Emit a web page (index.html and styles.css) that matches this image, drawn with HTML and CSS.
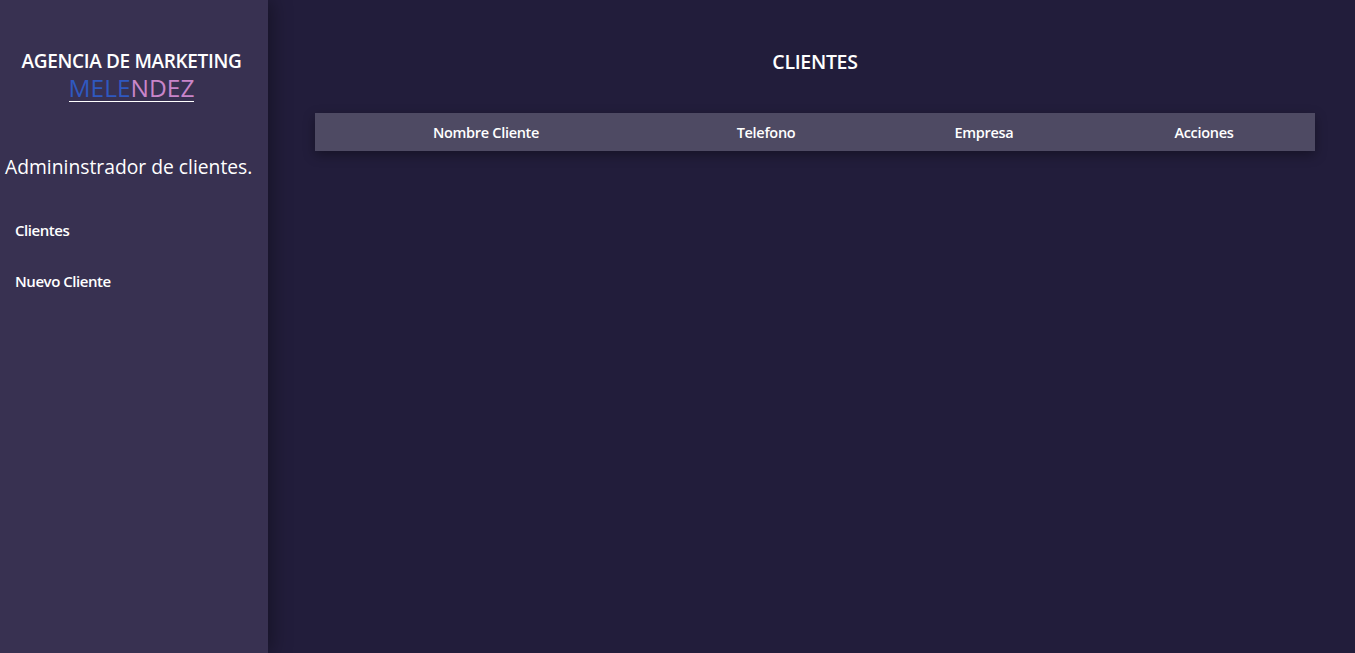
FILE: index.html
```html
<!DOCTYPE html>
<html lang="es">
<head>
<meta charset="utf-8">
<title>Clientes</title>
<link rel="stylesheet" href="styles.css">
</head>
<body>
<div class="layout">
  <aside class="sidebar">
    <h1 class="brand">AGENCIA DE MARKETING<br><span class="brand-name"><span class="blue">MELE</span><span class="pink">NDEZ</span></span></h1>
    <p class="subtitle">Admininstrador de clientes.</p>
    <nav class="nav">
      <a href="#" class="nav-link">Clientes</a>
      <a href="#" class="nav-link">Nuevo Cliente</a>
    </nav>
  </aside>
  <main class="main">
    <h2 class="title">CLIENTES</h2>
    <table class="table">
      <thead>
        <tr>
          <th class="col-name">Nombre Cliente</th>
          <th class="col-phone">Telefono</th>
          <th class="col-company">Empresa</th>
          <th class="col-actions">Acciones</th>
        </tr>
      </thead>
      <tbody></tbody>
    </table>
  </main>
</div>
</body>
</html>
```

FILE: styles.css
```css
* { box-sizing: border-box; }
html, body { margin: 0; padding: 0; height: 100%; }
body {
  font-family: "Open Sans", "Noto Sans", sans-serif;
  color: #fff;
  background: #221d3b;
}
.layout {
  display: flex;
  min-height: 100vh;
}
.sidebar {
  width: 268px;
  flex-shrink: 0;
  background: #383151;
  box-shadow: 4px 0 18px rgba(0,0,0,0.35);
  position: relative;
  z-index: 1;
  padding-top: 48px;
}
.brand {
  margin: 0;
  padding-right: 5px;
  text-align: center;
  font-size: 19px;
  font-weight: 600;
  line-height: 27px;
  letter-spacing: -0.35px;
}
.brand-name {
  display: inline-block;
  font-weight: 400;
  font-size: 24.5px;
  line-height: 26px;
  border-bottom: 1.5px solid #fff;
  letter-spacing: 0;
}
.blue { color: #2f58c0; }
.pink { color: #c985c9; }
.subtitle {
  margin: 49px 0 0 5px;
  font-size: 19.3px;
  font-weight: 400;
  letter-spacing: 0;
}
.nav {
  display: flex;
  flex-direction: column;
  gap: 30px;
  padding: 40px 0 0 15px;
}
.nav-link {
  color: #fff;
  text-decoration: none;
  font-weight: 600;
  font-size: 15px;
  letter-spacing: -0.45px;
  line-height: 21px;
}
.main {
  flex: 1;
  padding: 48px 40px 0 47px;
}
.title {
  margin: 0;
  text-align: center;
  font-size: 19.5px;
  font-weight: 600;
  line-height: 28px;
  letter-spacing: -0.3px;
}
.table {
  margin-top: 37px;
  width: 1000px;
  border-collapse: collapse;
  box-shadow: 0 4px 12px rgba(0,0,0,0.35);
}
.table th {
  background: #4e4a63;
  height: 38px;
  font-size: 14.5px;
  font-weight: 600;
  letter-spacing: -0.3px;
  padding: 0;
  text-align: center;
}
.col-name { width: 342px; }
.col-phone { width: 218px; }
.col-company { width: 218px; }
.col-actions { width: 222px; }
```
